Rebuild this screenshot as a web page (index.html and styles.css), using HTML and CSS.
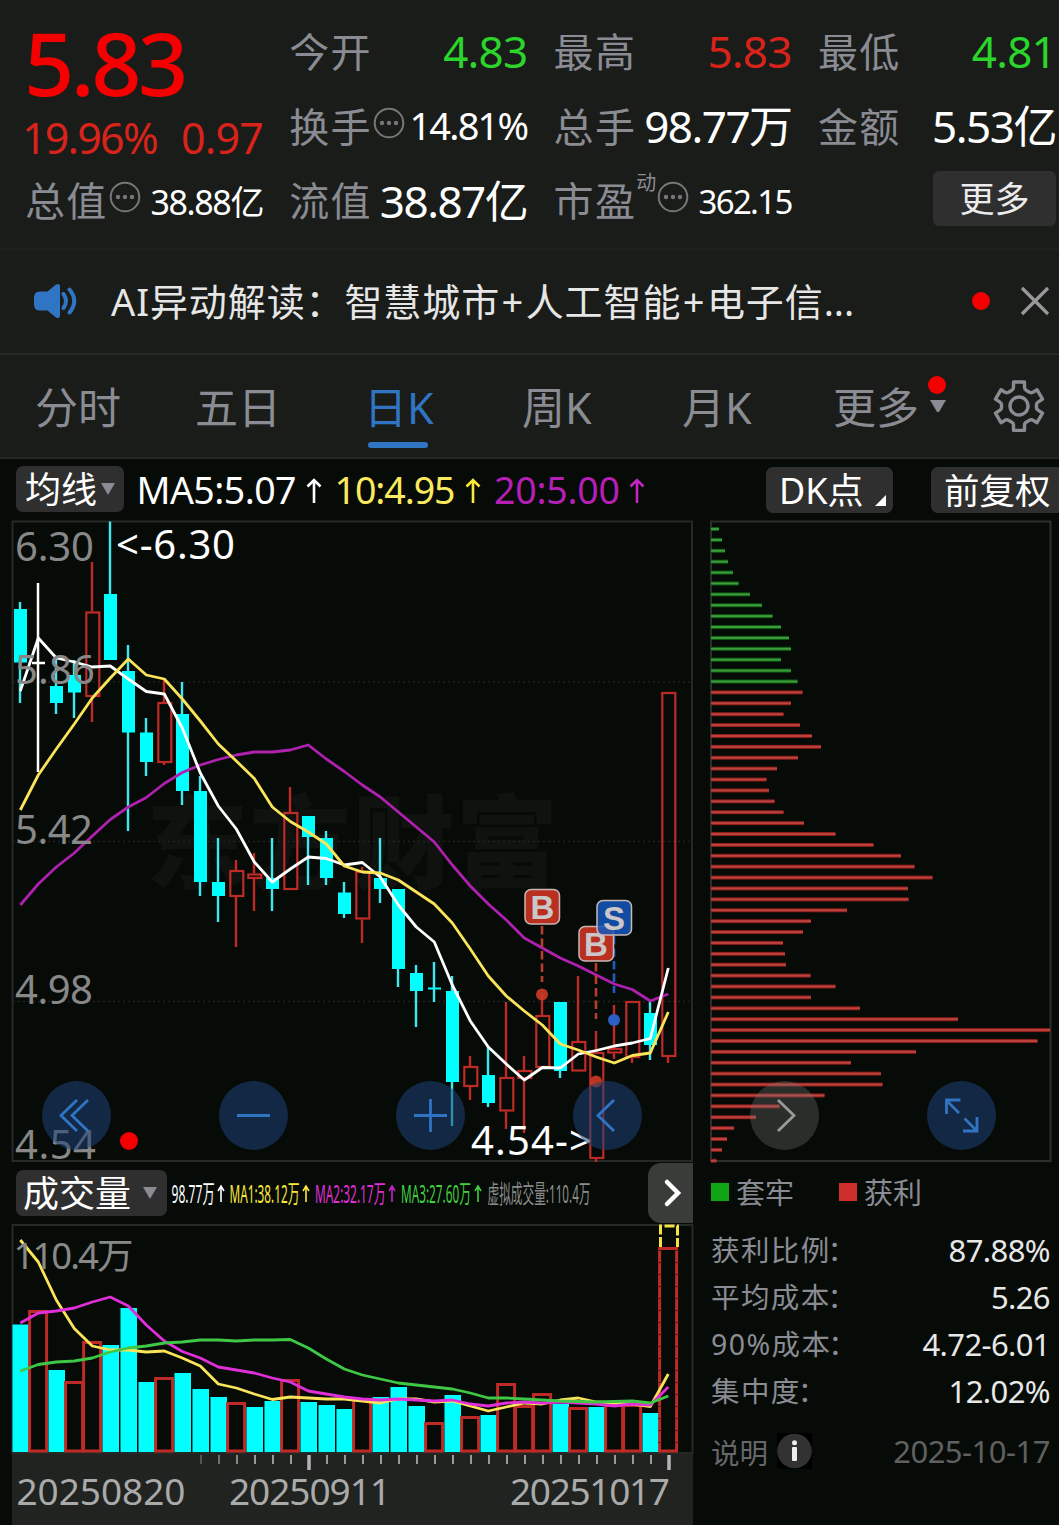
FILE: index.html
```html
<!DOCTYPE html>
<html lang="zh-CN">
<head>
<meta charset="utf-8">
<title>日K</title>
<link rel="stylesheet" href="styles.css">
</head>
<body>
<svg width="0" height="0" class="defs" aria-hidden="true">
  <symbol id="dots" viewBox="0 0 32 32"><circle cx="16" cy="16" r="14.3" fill="none" stroke="#777" stroke-width="2"/><g fill="#777"><circle cx="9" cy="16" r="2.2"/><circle cx="16" cy="16" r="2.2"/><circle cx="23" cy="16" r="2.2"/></g></symbol>
</svg>

<header class="quote">
  <div class="headline">
    <div class="price">5.83</div>
    <div class="change"><span>19.96%</span><span class="diff">0.97</span></div>
  </div>
  <div class="cell"><span class="label">今开</span><span class="value down">4.83</span></div>
  <div class="cell"><span class="label">最高</span><span class="value up">5.83</span></div>
  <div class="cell"><span class="label">最低</span><span class="value down">4.81</span></div>
  <div class="cell"><span class="label">换手</span><svg class="more-icon"><use href="#dots"/></svg><span class="value mid">14.81%</span></div>
  <div class="cell"><span class="label">总手</span><span class="value tight">98.77万</span></div>
  <div class="cell"><span class="label">金额</span><span class="value tight">5.53亿</span></div>
  <div class="cell"><span class="label">总值</span><svg class="more-icon"><use href="#dots"/></svg><span class="value small">38.88亿</span></div>
  <div class="cell"><span class="label">流值</span><span class="value tight">38.87亿</span></div>
  <div class="cell"><span class="label">市盈</span><sup class="sup">动</sup><svg class="more-icon"><use href="#dots"/></svg><span class="value small pe">362.15</span></div>
  <div class="cell"><button class="more-btn">更多</button></div>
</header>

<section class="news">
  <svg class="speaker" viewBox="0 0 46 38"><path d="M7 9.500h7.500L23 2.500Q27 .5 27 5v28q0 4.500-4 2.500L14.500 28.500H7q-6 0-6-6v-7q0-6 6-6Z" fill="#3074c4"/><path d="M30.500 12q5 7 0 14M36.500 7.500q9.500 11.500 0 23" fill="none" stroke="#3074c4" stroke-width="4" stroke-linecap="round"/></svg>
  <p class="news-text">AI异动解读：智慧城市<i>+</i>人工智能<i>+</i>电子信<b>...</b></p>
  <span class="dot"></span>
  <svg class="close" viewBox="0 0 30 30"><path d="M2 2 28 28M28 2 2 28" stroke="#999" stroke-width="3.200"/></svg>
</section>

<nav class="tabs">
  <span>分时</span><span>五日</span><span class="active">日K</span><span>周K</span><span>月K</span>
  <span class="tab-more">更多<i class="marks"><i class="dot"></i><i class="caret"></i></i></span>
  <svg class="gear" viewBox="0 0 54 54" fill="none" stroke="#8a8b93" stroke-width="3.400" stroke-linejoin="round"><path d="M21.500 3h11v5.500q0 2 2 3l3 1.700q2 1 3.500 0l4-2.500 5.500 9.500-4.500 3q-1.500 1-1.500 2.500v3q0 1.500 1.500 2.500l4.500 3-5.500 9.500-4-2.500q-1.500-1-3.500 0l-3 1.700q-2 1-2 3v5.500h-11v-5.500q0-2-2-3l-3-1.700q-2-1-3.500 0l-4 2.500-5.500-9.500 4.500-3q1.500-1 1.500-2.500v-3q0-1.500-1.500-2.500l-4.500-3 5.500-9.500 4 2.500q1.500 1 3.500 0l3-1.700q2-1 2-3Z"/><circle cx="27" cy="27" r="9"/></svg>
</nav>

<section class="indicator">
  <button class="chip ma-chip">均线<i class="caret"></i></button>
  <svg class="ma-legend" viewBox="130 460 530 60" font-size="37.500">
    <g fill="#fff"><text x="136.500" y="504" textLength="160">MA5:5.07</text><path class="arrow" d="M314 503V480M307.500 486.500l6.500-6.500 6.500 6.500"/></g>
    <g fill="#fbe95f"><text x="334.500" y="504" textLength="121">10:4.95</text><path class="arrow y" d="M473 503V480M466.500 486.500l6.500-6.500 6.500 6.500"/></g>
    <g fill="#b51fb5"><text x="494" y="504" textLength="126">20:5.00</text><path class="arrow m" d="M637 503V480M630.500 486.500l6.500-6.500 6.500 6.500"/></g>
  </svg>
  <button class="chip dk-chip">DK点<i class="corner"></i></button>
  <button class="chip fq-chip">前复权</button>
</section>

<main class="charts">
  <div class="left">
    <svg class="kline" viewBox="0 520 700 643" font-size="40">
      <text x="146" y="881" class="watermark" textLength="412">东方财富</text>
      <g class="grid"><path d="M13 682H692M13 841.500H692M13 1001.500H692"/></g>
      <rect class="frame" x="12.500" y="521.500" width="679.500" height="639.500"/>
      <g id="candles"></g>
      <g id="averages"></g>
      <g class="scale">
        <text x="15" y="561" textLength="79">6.30</text>
        <text x="15" y="684" textLength="80">5.86</text>
        <text x="15" y="843.500" textLength="78">5.42</text>
        <text x="15" y="1003.500" textLength="78">4.98</text>
        <text x="15" y="1159" textLength="81">4.54</text>
      </g>
      <g fill="#fff"><text x="116" y="559" textLength="119">&lt;-6.30</text><text x="471" y="1154.500" textLength="121">4.54-&gt;</text></g>
      <g class="signals">
        <g stroke="#b93c2c"><path d="M542 926V982M596 963V1019"/></g>
        <path d="M614 936V993" stroke="#1f5cc0"/>
        <g fill="#cf3a27" fill-opacity=".9"><circle cx="542" cy="994.500" r="6"/><circle cx="596" cy="1081.500" r="6"/></g>
        <circle cx="614" cy="1020" r="6" fill="#2c5fc4"/>
        <g class="badge"><rect x="525" y="889.500" width="34.500" height="34.500" rx="6" fill="#b93020"/><text x="542.500" y="918.500">B</text></g>
        <g class="badge"><rect x="579" y="926.500" width="34.500" height="34.500" rx="6" fill="#b93020"/><text x="596" y="955.500">B</text></g>
        <g class="badge"><rect x="597" y="900.500" width="34.500" height="34.500" rx="6" fill="#1458bd" fill-opacity=".85"/><text x="614" y="929.500">S</text></g>
      </g>
    </svg>
    <div class="vol-head">
      <button class="chip vol-chip">成交量<i class="caret"></i></button>
      <svg class="vol-legend" viewBox="170 1163 475 60" font-size="25">
        <g fill="#fff"><text x="171.500" y="1202.500" textLength="43" lengthAdjust="spacingAndGlyphs">98.77万</text><path class="arrow" d="M221 1202V1186M218 1191l3-5 3 5"/></g>
        <g fill="#fbe83c"><text x="229.500" y="1202.500" textLength="70" lengthAdjust="spacingAndGlyphs">MA1:38.12万</text><path class="arrow y" d="M306 1202V1186M303 1191l3-5 3 5"/></g>
        <g fill="#e02fd8"><text x="315" y="1202.500" textLength="70.500" lengthAdjust="spacingAndGlyphs">MA2:32.17万</text><path class="arrow m" d="M392 1202V1186M389 1191l3-5 3 5"/></g>
        <g fill="#43cf43"><text x="401" y="1202.500" textLength="70" lengthAdjust="spacingAndGlyphs">MA3:27.60万</text><path class="arrow g" d="M478 1202V1186M475 1191l3-5 3 5"/></g>
        <text x="487.500" y="1202.500" fill="#8c8c8c" textLength="103" lengthAdjust="spacingAndGlyphs">虚拟成交量:110.4万</text>
      </svg>
      <button class="next"><svg viewBox="0 0 45 60"><path d="M19 19 30 30 19 41" fill="none" stroke="#fff" stroke-width="4.500" stroke-linecap="round"/></svg></button>
    </div>
    <svg class="volume" viewBox="0 1223 700 231">
      <path class="frame" d="M12.500 1225H692.500V1453H12.500Z"/>
      <g id="bars"></g>
      <path d="M660.500 1247V1226H677.500V1247" fill="none" stroke="#f3e344" stroke-width="3" stroke-dasharray="10 2.500"/>
      <path d="M660 1250V1450M677 1250V1450" fill="none" stroke="#5c1410" stroke-width="3.500" stroke-dasharray="1 11"/>
      <g id="volAverages"></g>
      <text class="scale" x="13.500" y="1269" font-size="36.500" textLength="120">110.4万</text>
    </svg>
    <svg class="dates" viewBox="12 1454 681 71" font-size="37">
      <g id="ticks"></g>
      <g fill="#aaa"><text x="16.500" y="1504.500" textLength="169">20250820</text><text x="229" y="1504.500" textLength="162">20250911</text><text x="510" y="1504.500" textLength="160">20251017</text></g>
    </svg>
  </div>

  <div class="right">
    <svg class="chips" viewBox="708 520 351 643"><rect class="frame" x="711" y="521.500" width="339.500" height="639.500"/><g id="chipBars"></g></svg>
    <div class="legend"><i class="sq green"></i><span>套牢</span><i class="sq red"></i><span>获利</span></div>
    <dl class="stats">
      <div><dt>获利比例<i>：</i></dt><dd>87.88%</dd></div>
      <div><dt>平均成本<i>：</i></dt><dd>5.26</dd></div>
      <div><dt>90%成本<i>：</i></dt><dd>4.72-6.01</dd></div>
      <div><dt>集中度<i>：</i></dt><dd>12.02%</dd></div>
    </dl>
    <div class="note"><span>说明</span><svg viewBox="0 0 35 36"><rect width="35" height="36" fill="#000"/><circle cx="17.500" cy="18" r="17.300" fill="#323232"/><circle cx="17.500" cy="9.800" r="2.500" fill="#eee"/><rect x="15" y="14" width="5" height="14" rx="1" fill="#eee"/></svg><time>2025-10-17</time></div>
  </div>

  <div class="controls">
    <svg viewBox="0 0 69 69"><circle cx="34.500" cy="34.500" r="34.500"/><path d="M35 19 19 34.500 35 50M46 19 30 34.500 46 50"/></svg>
    <svg viewBox="0 0 69 69"><circle cx="34.500" cy="34.500" r="34.500"/><path d="M18 34.500H51"/></svg>
    <svg viewBox="0 0 69 69"><circle cx="34.500" cy="34.500" r="34.500"/><path d="M18 34.500H51M34.500 18V51"/></svg>
    <svg viewBox="0 0 69 69"><circle cx="34.500" cy="34.500" r="34.500"/><path d="M41 19 25 34.500 41 50"/></svg>
    <svg viewBox="0 0 69 69" class="off"><circle cx="34.500" cy="34.500" r="34.500"/><path d="M28 19 44 34.500 28 50"/></svg>
    <svg viewBox="0 0 69 69"><circle cx="34.500" cy="34.500" r="34.500"/><path d="M32 32 19.500 19.500M19.500 33V19H33.500M37.500 37.500 50 50M50 36V50H36"/></svg>
    <i class="dot"></i>
  </div>
</main>
<script src="chart.js"></script>
</body>
</html>
```

FILE: styles.css
```css
* { box-sizing: border-box; }
body {
  margin: 0;
  width: 1059px;
  height: 1525px;
  overflow: hidden;
  background: #070b07;
  color: #fff;
  font-family: "Noto Sans", "Noto Sans CJK SC", sans-serif;
}
i, b { font-style: normal; font-weight: 400; }
p, dl, dd { margin: 0; }
svg { display: block; flex: none; }
.defs { position: absolute; }
button { border: 0; padding: 0; margin: 0; font: inherit; color: inherit; }
.dot { display: block; width: 18px; height: 18px; border-radius: 50%; background: #f40000; }
.caret { display: block; border: 7.5px solid transparent; border-bottom: 0; border-top: 12px solid #8a8b93; }

.quote {
  display: grid;
  grid-template-columns: repeat(4, 238px);
  grid-template-rows: repeat(3, 74.5px);
  column-gap: 26.3px;
  height: 250px;
  padding: 15px 0 0 25px;
  background: #191c19;
  border-bottom: 2px solid #1e211e;
}
.headline { grid-row: span 2; display: flex; flex-direction: column; }
.price { height: 98px; margin-left: -1px; font-size: 88px; line-height: 94px; font-weight: 500; letter-spacing: -3.5px; color: #f40000; }
.change { display: flex; justify-content: space-between; margin-left: -3px; font-size: 43px; line-height: 50px; letter-spacing: -1.8px; color: #d8231b; }
.change .diff { letter-spacing: -.8px; }
.cell { display: flex; align-items: center; line-height: 74px; white-space: nowrap; }
.label { font-size: 40px; letter-spacing: 1.3px; color: #8a8b93; }
.value { margin: -2px 0 0 auto; font-size: 44px; letter-spacing: -.8px; }
.value.tight { margin-top: -1px; letter-spacing: -1.5px; }
.value.mid { margin-top: -3px; font-size: 38px; letter-spacing: -1.8px; }
.value.small { margin-top: 1px; font-size: 34px; letter-spacing: -1.4px; }
.value.small.pe { font-size: 33px; letter-spacing: -1.7px; }
.up { color: #d8231b; }
.down { color: #2bd52b; }
.more-icon { width: 32px; height: 32px; margin: -8px 0 0 1px; }
.sup { margin-top: -36px; font-size: 20px; line-height: 24px; color: #8a8b93; }
.sup + .more-icon { margin-left: 1px; }
.more-btn { margin: -5px 0 0 115px; width: 123px; height: 55px; border-radius: 6px; background: #2f2f2f; font-size: 35px; line-height: 54px; color: #ececec; }

.news { display: flex; align-items: center; height: 104.5px; padding: 0 9px 0 33px; background: #191c19; border-bottom: 2px solid #262926; }
.speaker { width: 46px; height: 38px; }
.news-text { margin-left: 32px; font-size: 38px; letter-spacing: .9px; line-height: 60px; color: #e6e6e6; white-space: nowrap; }
.news-text i { padding: 0 1.5px; }
.news-text b { letter-spacing: 0; }
.news .dot { margin-left: auto; margin-right: 30px; }
.close { width: 30px; height: 30px; }

.tabs {
  display: grid;
  grid-template-columns: 160px 171px 156px 160px 151px 158px 54px;
  align-items: center;
  height: 104.5px;
  padding: 4px 0 0 35px;
  background: #191c19;
  border-bottom: 2px solid #242724;
  font-size: 43px;
  line-height: 60px;
  color: #8a8b93;
}
.tabs span { position: relative; }
.tabs .active { color: #3074c4; left: -2px; }
.active::after { content: ""; position: absolute; left: 4px; bottom: -10px; width: 60px; height: 6px; border-radius: 3px; background: #3074c4; }
.tab-more { display: flex; }
.marks { margin: -2px 0 0 9px; }
.marks .caret { margin: 6px 0 0 1.5px; }
.gear { width: 54px; height: 54px; margin: -4px 0 0 1px; }

.indicator { display: flex; height: 61px; padding: 7px 0 0 16px; }
.chip { display: flex; align-items: center; flex: none; height: 46px; border-radius: 7px; background: #2f2f2f; font-size: 36px; line-height: 46px; white-space: nowrap; }
.ma-chip { width: 108px; padding: 2px 0 0 9px; gap: 4px; }
.ma-chip .caret { margin-top: -3px; }
.ma-legend { width: 530px; height: 60px; margin: -6px 0 0 6px; }
.arrow { fill: none; stroke: #fff; stroke-width: 2.6px; }
.arrow.y { stroke: #fbe83c; }
.arrow.m { stroke: #c424c4; }
.arrow.g { stroke: #43cf43; }
.vol-legend .arrow { stroke-width: 1.6px; }
.dk-chip { width: 127px; margin: 1px 0 0 106px; padding: 1px 0 0 13px; position: relative; letter-spacing: 0; }
.corner { position: absolute; right: 7px; bottom: 7px; border-left: 11px solid transparent; border-bottom: 11px solid #fff; }
.fq-chip { width: 140px; margin: 1px 0 0 38px; padding-left: 13px; font-size: 35.5px; }

.charts { display: flex; position: relative; height: 1005px; }
.left { width: 700px; margin-right: 8px; }
.right { width: 351px; }
.kline { width: 700px; height: 643px; overflow: visible; }
.chips { width: 351px; height: 643px; }
.frame { fill: none; stroke: #262826; stroke-width: 2px; }
.chips .frame { stroke: #2c2f2c; }
.grid { stroke: #202220; stroke-width: 1.5px; stroke-dasharray: 2 3; }
.watermark { font-size: 102px; font-weight: 900; fill: #0f120f; }
.scale { fill: #888; }
.line { fill: none; stroke-width: 2.8px; stroke-linejoin: round; }
.signals > path, .signals > g > path { fill: none; stroke-width: 2.6px; stroke-dasharray: 8.5px 4px; }
.badge rect { stroke: #c9b6b6; stroke-width: 1.5px; }
.badge text { font: bold 33px "Liberation Sans", sans-serif; fill: #cbc6c8; text-anchor: middle; }

.vol-head { display: flex; height: 60px; padding-left: 16px; }
.vol-chip { width: 151px; height: 46px; margin-top: 7px; padding: 2px 0 0 7px; gap: 12px; }
.vol-chip .caret { margin-top: -3px; }
.vol-legend { width: 475px; height: 60px; margin-left: 3px; }
.next { width: 45px; height: 60px; margin-left: 3px; border-radius: 13px 0 0 13px; background: #393c39; }
.next svg { width: 45px; height: 60px; }
.volume { width: 700px; height: 231px; }
.dates { width: 681px; height: 71px; margin-left: 12px; background: #202320; }

.legend { display: flex; align-items: center; height: 60px; padding-left: 3px; font-size: 29px; line-height: 40px; color: #8a8b93; }
.legend .sq { width: 18px; height: 18px; margin: -3px 7px 0 0; }
.sq.green { background: #0fa515; }
.sq.red { background: #cd302c; }
.legend span + .sq { margin-left: 45px; }
.stats { padding: 4px 9px 0 3px; }
.stats div { display: flex; justify-content: space-between; height: 47px; line-height: 47px; font-size: 28.5px; }
.stats dt { color: #8a8b93; letter-spacing: 1.4px; }
.stats dt i { margin-left: -3px; }
.stats dd { font-size: 31px; letter-spacing: -.6px; color: #e8e8e8; }
.note { display: flex; align-items: center; height: 36px; margin-top: 18px; padding: 0 9px 0 3px; font-size: 28.5px; color: #66676a; }
.note svg { width: 35px; height: 36px; margin-left: 9px; }
.note time { margin-left: auto; font-size: 31px; letter-spacing: -.5px; color: #606060; }

.controls { position: absolute; left: 41.5px; top: 560.5px; display: flex; gap: 108.1px; }
.controls svg { width: 69px; height: 69px; fill: none; stroke: #3074c4; stroke-width: 2.8px; }
.controls circle { fill: #1e4276; fill-opacity: .55; stroke: none; }
.controls .off { stroke: #999; }
.controls .off circle { fill: #777; fill-opacity: .32; }
.controls .dot { position: absolute; left: 78px; top: 51px; }
```

FILE: chart.js
```js
const CYAN = '#00ffff', RED = '#be2a26';
const X0 = 20.3, STEP = 18;
const x = i => X0 + STEP * i;
const put = (id, html) => { document.getElementById(id).innerHTML = html; };
const line = (ys, color) =>
  `<polyline class="line" stroke="${color}" points="${ys.map((y, i) => x(i) + ',' + y).join(' ')}"/>`;

// type, high, body top, body bottom, low
const candles = [
  ['c',602,609,662.5,703],['w',583,663,663,772],['c',658,686,703,714],['c',660,675,692.5,718],
  ['r',562,611.5,697,722],['c',521.5,594,660,660],['c',645,671,732.5,831],['c',718,732.5,762,776],
  ['r',678,702,763,765],['c',682,714,791,805],['c',776,791,882,896],['c',838,882,896,922],
  ['r',860,870,897,947],['r',853,873.5,879,911],['c',838,878,889,911],['r',787,812,890,890],
  ['c',816,816,837,885],['c',831,838,878,885],['c',882,892.5,914,918],['r',867,871,919.5,943],
  ['c',838,878,889,903],['c',889,889,969,987],['c',965,973,991,1027],['c',962,987.5,989.5,1002],
  ['c',976,991,1082,1126],['r',1056,1066,1087,1100],['c',1047,1075,1103,1107],['r',1002,1077,1111.5,1129],
  ['r',1056,1070,1079,1133],['r',995,1015,1068,1068],['c',1002,1002,1071,1078],['r',976,1041,1071.5,1071.5],
  ['r',1031,1052,1159,1162],['r',1005,1048,1053.5,1059],['r',1001,1001,1058,1063],['c',1002,1013,1045,1060],
  ['r',692,692,1057,1063]
];
put('candles', candles.map(([t, h, a, b, l], i) => {
  const cx = x(i) - .3;
  if (t === 'w') return `<path d="M${cx} ${h}V${l}M${cx - 6} ${a}h13" stroke="#fff" stroke-width="2.500"/>`;
  if (t === 'c') return `<path d="M${cx} ${h}V${l}" stroke="#3fe9ee" stroke-width="2.400"/><rect x="${cx - 6}" y="${a}" width="13" height="${b - a}" fill="${CYAN}"/>`;
  return `<path d="M${cx} ${h}V${a}M${cx} ${b}V${l}" stroke="${RED}" stroke-width="2.400"/><rect x="${cx - 5.7}" y="${a + 1}" width="13" height="${Math.max(b - a - 2, 1)}" fill="none" stroke="${RED}" stroke-width="2.200"/>`;
}).join(''));

put('averages',
  line([905,884,867,853,836,819.5,807,797.5,783.5,772.5,765,759.5,755,752,752,750,745,759,771.5,785,797,812,827,842,865,886,904,920,938,948,958,966,975,984,989.5,1001,994], '#ae20ae') +
  line([691,638,658,662,667,666,679,691.5,694,728,773,806,829,862,882,869,857,858.5,865,862.5,877,905,927,942,985,1021,1047,1064,1080,1067.5,1068,1054,1050.5,1046,1043,1038.5,968], '#ffffff') +
  line([810,775,749,724,698,678,659,675,679,699,721,744,761,778.5,807,821.5,832,844,866,872,873,880,892,904,923,949,976,996,1011,1025,1044,1050,1057,1063,1055.5,1053,1012], '#fbe45a'));

const volumes = ('c1324.5 r1310 c1370 r1381 r1341 c1345 c1308 c1382 r1377 c1373 c1389 c1397 r1402 c1407 c1401 r1379 c1402 c1405 c1409 ' +
  'r1399 c1397 c1387 c1406 r1422 c1395 r1416 c1415 r1383 r1405 r1393 c1404 r1407 c1407 r1404 r1404 c1413 r1247').split(' ');
put('bars', volumes.map((v, i) => {
  const top = +v.slice(1), left = 12 + STEP * i;
  return v[0] === 'c'
    ? `<rect x="${left + .5}" y="${top}" width="16.500" height="${1452 - top}" fill="${CYAN}"/>`
    : `<rect x="${left - .4}" y="${top + 1.5}" width="17" height="${1449.500 - top}" fill="none" stroke="${RED}" stroke-width="3"/>`;
}).join(''));

put('volAverages',
  line([1240,1262,1300,1328.5,1346,1350,1350,1352,1351,1358,1366,1384,1388,1394,1399.5,1397,1398,1399,1399,1401,1403,1399,1399,1402,1401,1406,1411,1407,1403,1404,1400,1398,1402,1403,1404,1406.5,1374], '#fbe45a') +
  line([1323,1313,1311,1308,1302,1297,1306,1325,1341,1351.5,1358,1367,1370,1373,1378,1382,1391,1394,1397,1399,1400,1399,1400,1401,1400,1404,1406,1403,1402,1403,1402,1403,1404,1406,1404,1405,1387], '#e02fd8') +
  line([1371,1364.5,1362,1361,1358,1352,1348,1346,1343,1342,1340,1340,1341,1340,1340,1339.5,1348,1359,1369,1375,1379,1383,1385,1387,1389,1393,1398,1398,1399,1400,1401,1401.5,1402,1401.5,1401,1403,1396], '#3fc845'));

let ticks = '';
for (let i = 10; i <= 36; i++) {
  const major = i === 16 || i === 36;
  const shade = i < 13 ? ['#555', '#707070', '#888'][i - 10] : '#9a9a9a';
  ticks += `<path d="M${21 + STEP * i} 1455V${major ? 1470 : 1464}" stroke="${major ? '#b4b4b4' : shade}" stroke-width="${major ? 3.5 : 2}"/>`;
}
put('ticks', ticks);

const GREEN_ROWS = 15;
const spread = [8,11,14,17,22,27.5,39,51,61.5,70,78,80,70,80,86.5,91.5,80,72.5,89,101,110,87,66,55.5,58,63.5,72.5,93,124.5,
  162.5,190,203.5,221.5,197,197.5,136,100,92,72,74,75,99.5,124.5,100,149,247,339,326.5,205,140,170,171.5,113.5,68.5,45,23,16,11,5.5];
put('chipBars', spread.map((w, i) => {
  const y = 529 + 10.893 * i;
  const [edge, core] = i < GREEN_ROWS ? ['#0c5c10', '#3f9c3c'] : ['#8a1d1a', '#bc423e'];
  return `<rect x="711" y="${y - 2}" width="${w}" height="4" fill="${edge}"/><rect x="711" y="${y - 1}" width="${w}" height="2" fill="${core}"/>`;
}).join(''));
```
